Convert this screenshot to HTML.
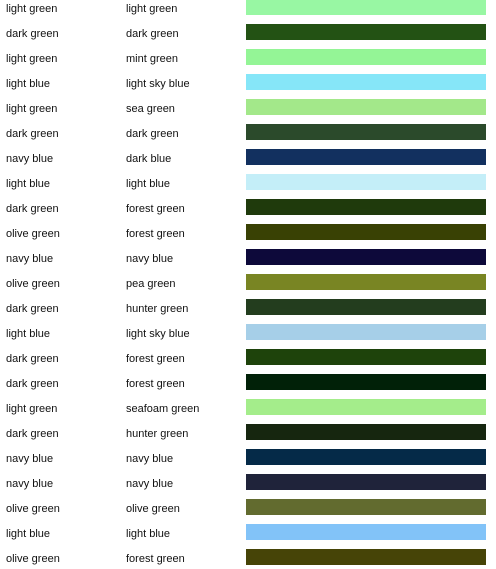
<!DOCTYPE html><html><head><style>
body{margin:0;width:496px;height:569px;background:#fff;position:relative;overflow:hidden;font-family:"Liberation Sans",sans-serif;font-size:11px;color:#111}
.r{position:absolute;left:0;width:496px;height:16px}
.a,.b{position:absolute;top:2px;line-height:16px}
.a{left:6px}.b{left:126px}
.s{position:absolute;left:246px;width:240px;top:0;height:16px}
</style></head><body>
<script>
var d=[["light green","light green","#98f7a3"],["dark green","dark green","#235214"],["light green","mint green","#94f596"],["light blue","light sky blue","#86e6f8"],["light green","sea green","#a3e88a"],["dark green","dark green","#2b4a2b"],["navy blue","dark blue","#12305f"],["light blue","light blue","#c4eef8"],["dark green","forest green","#1f3a0c"],["olive green","forest green","#394104"],["navy blue","navy blue","#0d093a"],["olive green","pea green","#798523"],["dark green","hunter green","#233d1e"],["light blue","light sky blue","#a6cfe8"],["dark green","forest green","#1e430b"],["dark green","forest green","#012108"],["light green","seafoam green","#a4ed8b"],["dark green","hunter green","#16260f"],["navy blue","navy blue","#052a48"],["navy blue","navy blue","#1f233a"],["olive green","olive green","#626b2f"],["light blue","light blue","#82c3f8"],["olive green","forest green","#464407"]];
for(var i=0;i<d.length;i++)document.write('<div class="r" style="top:'+(25*i-1)+'px"><span class="a">'+d[i][0]+'</span><span class="b">'+d[i][1]+'</span><div class="s" style="background:'+d[i][2]+'"></div></div>');
</script>
</body></html>
